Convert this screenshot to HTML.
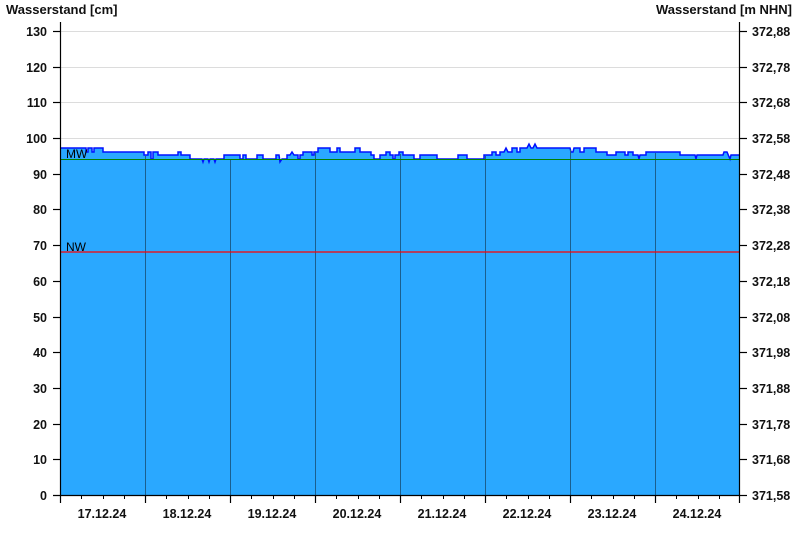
<!DOCTYPE html>
<html><head><meta charset="utf-8"><style>
body{margin:0;background:#fff}
svg text{font-family:"Liberation Sans",Arial,sans-serif}
</style></head><body>
<svg width="800" height="550" xmlns="http://www.w3.org/2000/svg">
<rect width="800" height="550" fill="#fff"/>
<g stroke="#dcdcdc" stroke-width="1">
<line x1="60" x2="740" y1="31.5" y2="31.5"/><line x1="60" x2="740" y1="67.5" y2="67.5"/><line x1="60" x2="740" y1="102.5" y2="102.5"/><line x1="60" x2="740" y1="138.5" y2="138.5"/>
</g>
<polygon fill="#2aa8ff" stroke="none" points="60,495 60,148 86,148 86,152 88,152 88,148 92,148 92,152 94,152 94,148 103,148 103,152 144,152 144,155 148,155 148,152 151,152 151,159 153,159 153,152 158,152 158,155 178,155 178,152 181,152 181,155 190,155 190,159 202,159 203,162 204,159 208,159 209,162 210,159 214,159 215,162 216,159 224,159 224,155 240,155 240,159 243,159 243,155 246,155 246,159 257,159 257,155 263,155 263,159 276,159 276,155 279,155 280,162 282,159 287,159 287,155 290,155 292,152 294,155 298,155 298,159 300,159 300,155 303,155 303,152 312,152 312,155 314,155 314,152 318,152 318,148 330,148 330,152 337,152 337,148 340,148 340,152 355,152 355,148 360,148 360,152 371,152 371,155 374,155 374,159 380,159 380,155 386,155 386,152 390,152 390,155 393,155 393,159 395,159 395,155 399,155 399,152 403,152 403,155 414,155 414,159 420,159 420,155 437,155 437,159 458,159 458,155 467,155 467,159 484,159 484,155 492,155 492,152 496,152 496,155 500,155 500,152 504,152 506,148 508,152 512,152 512,148 517,148 517,152 520,152 520,148 527,148 529,144 531,148 533,148 535,144 537,148 570,148 571,152 573,152 574,148 580,148 580,152 584,152 584,148 596,148 596,152 607,152 607,155 616,155 616,152 625,152 625,155 628,155 628,152 633,152 633,155 638,155 639,159 640,155 646,155 646,152 680,152 680,155 682,155 682,155 695,155 696,159 697,155 723,155 724,152 727,152 730,159 731,155 740,155 740,495"/>
<polyline fill="none" stroke="#0010ff" stroke-width="1.5" points="60,148 86,148 86,152 88,152 88,148 92,148 92,152 94,152 94,148 103,148 103,152 144,152 144,155 148,155 148,152 151,152 151,159 153,159 153,152 158,152 158,155 178,155 178,152 181,152 181,155 190,155 190,159 202,159 203,162 204,159 208,159 209,162 210,159 214,159 215,162 216,159 224,159 224,155 240,155 240,159 243,159 243,155 246,155 246,159 257,159 257,155 263,155 263,159 276,159 276,155 279,155 280,162 282,159 287,159 287,155 290,155 292,152 294,155 298,155 298,159 300,159 300,155 303,155 303,152 312,152 312,155 314,155 314,152 318,152 318,148 330,148 330,152 337,152 337,148 340,148 340,152 355,152 355,148 360,148 360,152 371,152 371,155 374,155 374,159 380,159 380,155 386,155 386,152 390,152 390,155 393,155 393,159 395,159 395,155 399,155 399,152 403,152 403,155 414,155 414,159 420,159 420,155 437,155 437,159 458,159 458,155 467,155 467,159 484,159 484,155 492,155 492,152 496,152 496,155 500,155 500,152 504,152 506,148 508,152 512,152 512,148 517,148 517,152 520,152 520,148 527,148 529,144 531,148 533,148 535,144 537,148 570,148 571,152 573,152 574,148 580,148 580,152 584,152 584,148 596,148 596,152 607,152 607,155 616,155 616,152 625,152 625,155 628,155 628,152 633,152 633,155 638,155 639,159 640,155 646,155 646,152 680,152 680,155 682,155 695,155 696,159 697,155 723,155 724,152 727,152 730,159 731,155 740,155"/>
<g stroke="#1a5f8f" stroke-width="1">
<line x1="145.5" x2="145.5" y1="156" y2="495"/><line x1="230.5" x2="230.5" y1="160" y2="495"/><line x1="315.5" x2="315.5" y1="153" y2="495"/><line x1="400.5" x2="400.5" y1="154" y2="495"/><line x1="485.5" x2="485.5" y1="156" y2="495"/><line x1="570.5" x2="570.5" y1="150" y2="495"/><line x1="655.5" x2="655.5" y1="153" y2="495"/>
</g>
<line x1="60" x2="740" y1="159.5" y2="159.5" stroke="#008000" stroke-width="1"/>
<line x1="60" x2="740" y1="252" y2="252" stroke="#ff0000" stroke-width="1.2"/>
<text x="66" y="158" font-size="12" fill="#000">MW</text>
<text x="66" y="251" font-size="12" fill="#000">NW</text>
<g stroke="#000" stroke-width="1.2">
<line x1="60.5" x2="60.5" y1="22" y2="503"/><line x1="739.5" x2="739.5" y1="22" y2="503"/><line x1="53" x2="740" y1="495.5" y2="495.5"/>
<line x1="53" x2="60" y1="31.5" y2="31.5"/><line x1="53" x2="60" y1="67.5" y2="67.5"/><line x1="53" x2="60" y1="102.5" y2="102.5"/><line x1="53" x2="60" y1="138.5" y2="138.5"/><line x1="53" x2="60" y1="174.5" y2="174.5"/><line x1="53" x2="60" y1="209.5" y2="209.5"/><line x1="53" x2="60" y1="245.5" y2="245.5"/><line x1="53" x2="60" y1="281.5" y2="281.5"/><line x1="53" x2="60" y1="317.5" y2="317.5"/><line x1="53" x2="60" y1="352.5" y2="352.5"/><line x1="53" x2="60" y1="388.5" y2="388.5"/><line x1="53" x2="60" y1="424.5" y2="424.5"/><line x1="53" x2="60" y1="459.5" y2="459.5"/>
<line x1="740" x2="747" y1="31.5" y2="31.5"/><line x1="740" x2="747" y1="67.5" y2="67.5"/><line x1="740" x2="747" y1="102.5" y2="102.5"/><line x1="740" x2="747" y1="138.5" y2="138.5"/><line x1="740" x2="747" y1="174.5" y2="174.5"/><line x1="740" x2="747" y1="209.5" y2="209.5"/><line x1="740" x2="747" y1="245.5" y2="245.5"/><line x1="740" x2="747" y1="281.5" y2="281.5"/><line x1="740" x2="747" y1="317.5" y2="317.5"/><line x1="740" x2="747" y1="352.5" y2="352.5"/><line x1="740" x2="747" y1="388.5" y2="388.5"/><line x1="740" x2="747" y1="424.5" y2="424.5"/><line x1="740" x2="747" y1="459.5" y2="459.5"/><line x1="740" x2="747" y1="495.5" y2="495.5"/>
<line x1="145.5" x2="145.5" y1="495" y2="503"/><line x1="230.5" x2="230.5" y1="495" y2="503"/><line x1="315.5" x2="315.5" y1="495" y2="503"/><line x1="400.5" x2="400.5" y1="495" y2="503"/><line x1="485.5" x2="485.5" y1="495" y2="503"/><line x1="570.5" x2="570.5" y1="495" y2="503"/><line x1="655.5" x2="655.5" y1="495" y2="503"/>
</g>
<g stroke="#000" stroke-width="1">
<path d="M81.5 495v4M103.5 495v4M124.5 495v4M166.5 495v4M188.5 495v4M209.5 495v4M251.5 495v4M273.5 495v4M294.5 495v4M336.5 495v4M358.5 495v4M379.5 495v4M421.5 495v4M443.5 495v4M464.5 495v4M506.5 495v4M528.5 495v4M549.5 495v4M591.5 495v4M613.5 495v4M634.5 495v4M676.5 495v4M698.5 495v4M719.5 495v4"/>
</g>
<g font-size="12.5" font-weight="bold" fill="#111" text-anchor="end">
<text x="47" y="36">130</text><text x="47" y="72">120</text><text x="47" y="107">110</text><text x="47" y="143">100</text><text x="47" y="179">90</text><text x="47" y="214">80</text><text x="47" y="250">70</text><text x="47" y="286">60</text><text x="47" y="322">50</text><text x="47" y="357">40</text><text x="47" y="393">30</text><text x="47" y="429">20</text><text x="47" y="464">10</text><text x="47" y="500">0</text>
</g>
<g font-size="12.5" font-weight="bold" fill="#111">
<text x="752" y="36">372,88</text><text x="752" y="72">372,78</text><text x="752" y="107">372,68</text><text x="752" y="143">372,58</text><text x="752" y="179">372,48</text><text x="752" y="214">372,38</text><text x="752" y="250">372,28</text><text x="752" y="286">372,18</text><text x="752" y="322">372,08</text><text x="752" y="357">371,98</text><text x="752" y="393">371,88</text><text x="752" y="429">371,78</text><text x="752" y="464">371,68</text><text x="752" y="500">371,58</text>
</g>
<g font-size="12.5" font-weight="bold" fill="#111" text-anchor="middle">
<text x="102" y="518">17.12.24</text><text x="187" y="518">18.12.24</text><text x="272" y="518">19.12.24</text><text x="357" y="518">20.12.24</text><text x="442" y="518">21.12.24</text><text x="527" y="518">22.12.24</text><text x="612" y="518">23.12.24</text><text x="697" y="518">24.12.24</text>
</g>
<text x="6" y="14" font-size="13" font-weight="bold" fill="#111">Wasserstand [cm]</text>
<text x="792" y="14" font-size="13" font-weight="bold" fill="#111" text-anchor="end">Wasserstand [m NHN]</text>
</svg>
</body></html>
